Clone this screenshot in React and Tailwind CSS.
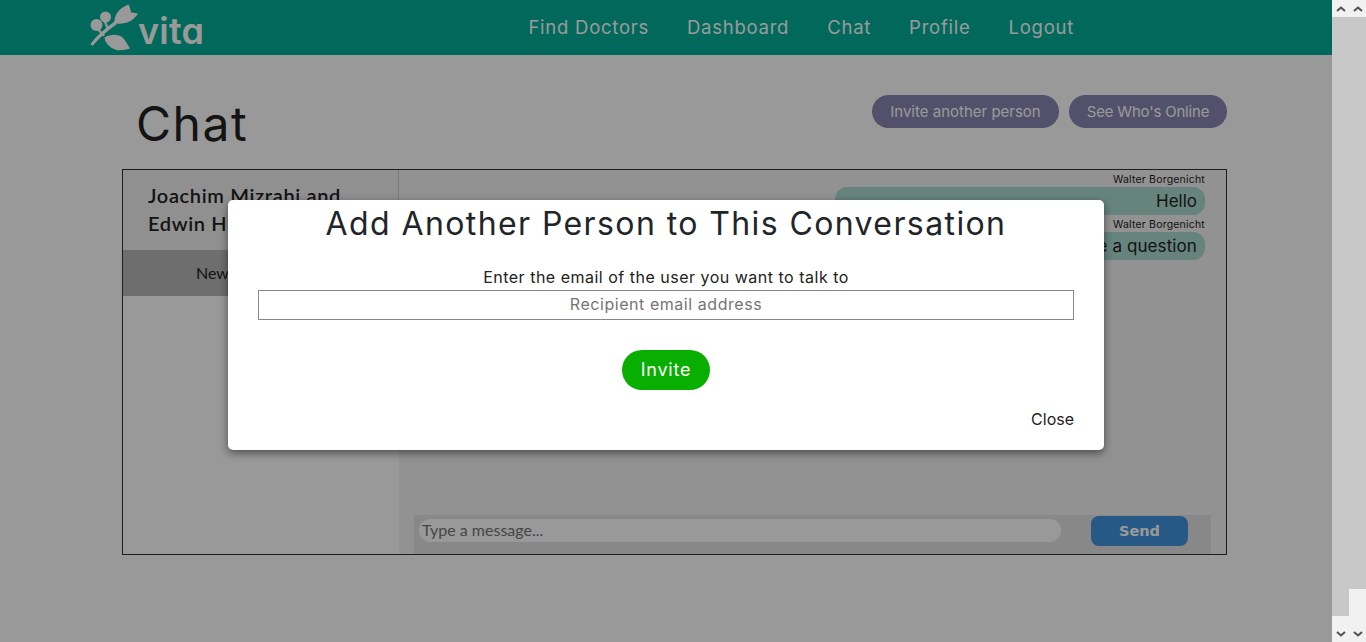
const mont = "font-['Inter','Noto_Sans',sans-serif]";

function Logo() {
  return (
    <div className="flex items-center">
      <svg width="53" height="55" viewBox="0 0 53 55" fill="#fff">
        <path d="M5.5 44 L7.5 46 C14 38 22 31 32 24 L30 21 C21 28 12 35 5.5 44 Z" />
        <path d="M29.5 23 C29 15 34 8 43.5 4.5 C45 7 45.5 10 46 12.5 C48.5 12.5 51 13 53 14 C50 17 47 22 40 23 C36 24 32 24 29.5 23 Z" />
        <path d="M19.5 37.5 C26 33.5 35 34 39 39 C41 42 43 45 45 48.5 C40 50 35 50.5 31 50 C25 48 20 43 19.5 37.5 Z" />
        <circle cx="11.5" cy="25" r="6" />
        <circle cx="20.5" cy="17" r="5.5" />
        <path d="M14 29 L20 35 L18.5 36.5 L12.5 30.5 Z" />
        <path d="M21 21 L24 29 L22 30 L19 22 Z" />
      </svg>
      <span className="mt-[6px] text-[36px] leading-none font-semibold text-white font-['Inter',sans-serif] [font-feature-settings:'cv11'] tracking-[0.2px]">
        vita
      </span>
    </div>
  );
}

function Bubble({ name, text, spacing }) {
  return (
    <div className="flex flex-col items-end">
      <div className="pt-[2px] text-[10.5px] leading-[15px] tracking-[0.2px] text-[#222] font-['Inter',sans-serif]">{name}</div>
      <div className={`w-[370px] h-[28px] pt-[2px] rounded-[12px] bg-[#aadccf] px-2 flex items-center justify-end text-[17px] text-[#222] font-['Inter',sans-serif] ${spacing}`}>
        {text}
      </div>
    </div>
  );
}

function Thumb({ height }) {
  return (
    <div className="w-[17px] h-full flex flex-col bg-[#f1f1f1]">
      <div className="h-[17px] flex items-center justify-center">
        <svg width="10" height="6" viewBox="0 0 10 6" fill="none" stroke="#505050" strokeWidth="2">
          <path d="M1 5 L5 1.5 L9 5" />
        </svg>
      </div>
      <div className={height}></div>
      <div className="mt-auto h-[17px] flex items-center justify-center">
        <svg width="10" height="6" viewBox="0 0 10 6" fill="none" stroke="#505050" strokeWidth="2">
          <path d="M1 1 L5 4.5 L9 1" />
        </svg>
      </div>
    </div>
  );
}

export default function App() {
  return (
    <div className="flex h-[642px] w-[1366px] overflow-hidden bg-white">
      <div className="relative w-[1332px] h-full">
        {/* header */}
        <header className="h-[55px] bg-[#00af99] flex items-center pl-[85px] pr-[258px]">
          <Logo />
          <nav className={`ml-auto flex gap-[38px] text-[18.5px] tracking-[0.75px] text-white ${mont}`}>
            <span>Find Doctors</span>
            <span>Dashboard</span>
            <span>Chat</span>
            <span>Profile</span>
            <span>Logout</span>
          </nav>
        </header>

        <main className="pl-[122px] pr-[105px]">
          <div className="flex items-start justify-between pt-[40px] h-[114px]">
            <h1 className={`ml-[14px] text-[48px] leading-[58px] tracking-[1.5px] text-[#222] ${mont}`}>Chat</h1>
            <div className={`flex gap-[10px] text-[15px] text-white ${mont}`}>
              <button className="w-[187px] h-[33px] pt-[2px] rounded-full bg-[#8985b1]">Invite another person</button>
              <button className="w-[158px] h-[33px] pt-[2px] rounded-full bg-[#8985b1] tracking-[-0.2px]">See Who's Online</button>
            </div>
          </div>

          {/* chat box */}
          <div className="flex h-[386px] w-[1105px] border border-[#333]">
            <aside className="w-[276px] font-['Lato',sans-serif]">
              <div className="h-[80px] bg-[#f1f1f1] border-r border-[#ccc] pl-[25px] pt-[11px] text-[20px] font-semibold tracking-[0.65px] leading-[28px] text-[#222]">
                Joachim Mizrahi and
                <br />
                Edwin Hubble
              </div>
              <div className="h-[46px] bg-[#b8b8b8] flex items-center justify-center text-[16px] text-[#222]">
                New Conversation
              </div>
            </aside>
            <section className="flex-1 flex flex-col bg-[#f3f3f3] pl-[15px] pr-[15px]">
              <div className="flex-1 pr-[6px]">
                <Bubble name="Walter Borgenicht" text="Hello" spacing="" />
                <Bubble name="Walter Borgenicht" text="I have a question" spacing="tracking-[0.1px]" />
              </div>
              <div className="h-[39px] bg-[#e3e3e3] flex items-start pl-[5px]">
                <input
                  placeholder="Type a message..."
                  className="mt-[4px] w-[642px] h-[23px] pb-[2px] rounded-[12px] bg-white pl-[3px] text-[16px] font-['Lato',sans-serif] placeholder:text-[#757575] outline-none"
                />
                <button className="ml-[30px] mt-[1px] w-[97px] h-[30px] pt-[1px] rounded-[8px] bg-[#4095de] text-white text-[14.5px] font-bold font-['DejaVu_Sans',sans-serif]">
                  Send
                </button>
              </div>
            </section>
          </div>
        </main>

        {/* modal backdrop */}
        <div className="absolute inset-0 bg-black/40 flex justify-center pt-[200px]">
          <div className="w-[876px] h-[250px] bg-white rounded-[5px] shadow-[0_3px_9px_rgba(0,0,0,0.5)] px-[30px] text-center">
            <h2 className={`text-[32px] leading-[48px] tracking-[1.4px] text-[#212529] ${mont}`}>
              Add Another Person to This Conversation
            </h2>
            <div className={`mt-[17px] text-[16px] leading-[25px] tracking-[0.5px] text-[#222] ${mont}`}>
              Enter the email of the user you want to talk to
            </div>
            <input
              placeholder="Recipient email address"
              className={`block w-full h-[30px] pb-[2px] border border-[#888] text-center text-[16px] tracking-[0.55px] outline-none placeholder:text-[#757575] ${mont}`}
            />
            <button className={`mt-[30px] w-[88px] h-[40px] pb-[2px] rounded-full bg-[#08ae00] text-white text-[18px] tracking-[0.8px] ${mont}`}>
              Invite
            </button>
            <div className={`mt-[17px] text-right text-[16px] leading-[24px] text-[#222] ${mont}`}>Close</div>
          </div>
        </div>
      </div>

      {/* nested page scrollbars */}
      <div className="flex h-full">
        <Thumb height="h-[599px] bg-[#c8c8c8]" />
        <Thumb height="h-[572px] bg-[#c8c8c8]" />
      </div>
    </div>
  );
}
